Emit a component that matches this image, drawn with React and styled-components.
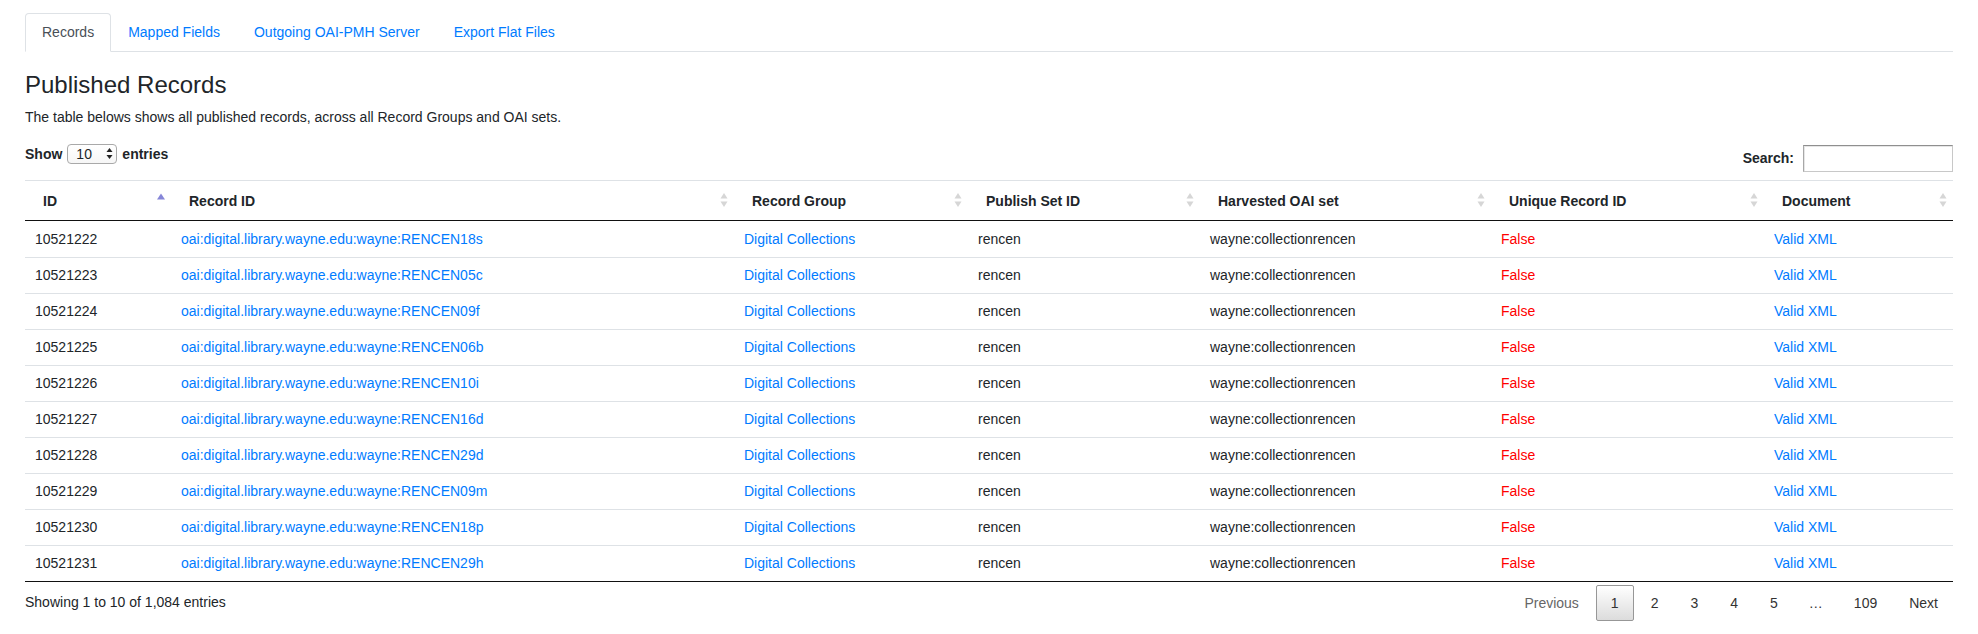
import styled, { createGlobalStyle } from "styled-components";

const GlobalStyle = createGlobalStyle`
  * { box-sizing: border-box; }
  html, body { margin: 0; padding: 0; background: #fff; }
  body {
    font-family: "Liberation Sans", Arial, Helvetica, sans-serif;
    font-size: 14px;
    line-height: 1.5;
    color: #212529;
  }
`;

const Page = styled.div`
  padding: 13px 25px 0;
`;

const Tabs = styled.ul`
  display: flex;
  list-style: none;
  margin: 0;
  padding: 0;
  border-bottom: 1px solid #dee2e6;
`;

const Tab = styled.li`
  margin-bottom: -1px;
`;

const TabLink = styled.a`
  display: block;
  padding: 8px 16px;
  line-height: 21px;
  border: 1px solid transparent;
  border-color: ${(p) => (p.$active ? "#dee2e6 #dee2e6 #fff" : "transparent")};
  border-top-left-radius: 4px;
  border-top-right-radius: 4px;
  background: ${(p) => (p.$active ? "#fff" : "transparent")};
  color: ${(p) => (p.$active ? "#495057" : "#007bff")};
  text-decoration: none;
  cursor: pointer;
`;

const Title = styled.h3`
  margin: 19px 0 7px;
  font-size: 24px;
  font-weight: 400;
  line-height: 1.2;
`;

const Lead = styled.p`
  margin: 0 0 16px;
`;

const Controls = styled.div`
  display: flex;
  justify-content: space-between;
  align-items: flex-start;
  height: 36px;
`;

const LengthLabel = styled.label`
  display: flex;
  align-items: center;
  gap: 5px;
  font-weight: 700;
  line-height: 21px;
`;

const SelectWrap = styled.span`
  position: relative;
  display: inline-block;
  height: 20px;
`;

const Select = styled.select`
  appearance: none;
  -webkit-appearance: none;
  width: 50px;
  height: 20px;
  padding: 0 0 0 8px;
  border: 1px solid #a9a9a9;
  border-radius: 4px;
  background: linear-gradient(to bottom, #fff 0%, #f6f6f6 100%);
  font-family: inherit;
  font-size: 14px;
  font-weight: 400;
  line-height: 18px;
  color: #212529;
`;

const SelectArrows = styled.svg`
  position: absolute;
  right: 4px;
  top: 3px;
  pointer-events: none;
`;

const SearchLabel = styled.label`
  display: flex;
  align-items: center;
  gap: 9px;
  margin-top: 1px;
  font-weight: 700;
`;

const SearchInput = styled.input`
  width: 150px;
  height: 27px;
  padding: 2px 4px;
  border: 1px solid #c8c8c8;
  border-top-color: #8f8f8f;
  border-left-color: #a8a8a8;
  box-shadow: inset 1px 1px 0 #e6e6e6;
  font-family: inherit;
  font-size: 14px;
`;

const Table = styled.table`
  width: 100%;
  table-layout: fixed;
  border-collapse: separate;
  border-spacing: 0;
`;

const Th = styled.th`
  position: relative;
  padding: 10px 18px 9px;
  line-height: 20px;
  text-align: left;
  font-weight: 700;
  border-top: 1px solid #dee2e6;
  border-bottom: 1px solid #111;
  white-space: nowrap;
`;

const SortIcon = styled.svg`
  position: absolute;
  right: 6px;
  top: 50%;
  transform: translateY(-50%);
`;

const Row = styled.tr`
  &:first-child td { padding-top: 9px; }
  &:last-child td { border-bottom-color: #111; }
`;

const Td = styled.td`
  padding: 8px 10px;
  line-height: 19px;
  border-bottom: 1px solid #dee2e6;
  white-space: nowrap;
  overflow: hidden;
  color: ${(p) => (p.$tone === "link" ? "#007bff" : p.$tone === "bad" ? "#f00" : "#212529")};
`;

const Footer = styled.div`
  display: flex;
  justify-content: space-between;
  align-items: flex-start;
`;

const Info = styled.div`
  padding-top: 10.5px;
  line-height: 21px;
`;

const Pager = styled.div`
  display: flex;
  align-items: center;
  padding-top: 3px;
`;

const PageButton = styled.a`
  display: inline-block;
  padding: 7px 14px;
  margin-left: 2px;
  line-height: 20px;
  text-align: center;
  border: 1px solid ${(p) => (p.$current ? "#979797" : "transparent")};
  border-radius: 2px;
  background: ${(p) => (p.$current ? "linear-gradient(to bottom, #fff 0%, #dcdcdc 100%)" : "transparent")};
  color: ${(p) => (p.$disabled ? "#666" : "#333")};
  cursor: ${(p) => (p.$disabled ? "default" : "pointer")};
`;

const Ellipsis = styled.span`
  padding: 0 14px;
  margin-left: 2px;
  line-height: 20px;
  color: #333;
`;

const columns = [
  { label: "ID", width: 146, sort: "asc" },
  { label: "Record ID", width: 563 },
  { label: "Record Group", width: 234 },
  { label: "Publish Set ID", width: 232 },
  { label: "Harvested OAI set", width: 291 },
  { label: "Unique Record ID", width: 273 },
  { label: "Document", width: 189 },
];

const suffixes = ["18s", "05c", "09f", "06b", "10i", "16d", "29d", "09m", "18p", "29h"];

const rows = suffixes.map((s, i) => ({
  id: 10521222 + i,
  recordId: `oai:digital.library.wayne.edu:wayne:RENCEN${s}`,
}));

function Sort({ dir }) {
  return (
    <SortIcon width="8" height="14" viewBox="0 0 8 14">
      {dir === "asc" ? (
        <polygon points="4,0.5 8,6.5 0,6.5" fill="#8686d8" />
      ) : (
        <>
          <polygon points="4,0 7.5,5.5 0.5,5.5" fill="#d6d6d6" />
          <polygon points="0.5,8.5 7.5,8.5 4,14" fill="#d6d6d6" />
        </>
      )}
    </SortIcon>
  );
}

function App() {
  return (
    <Page>
      <GlobalStyle />
      <Tabs>
        <Tab><TabLink $active>Records</TabLink></Tab>
        <Tab><TabLink>Mapped Fields</TabLink></Tab>
        <Tab><TabLink>Outgoing OAI-PMH Server</TabLink></Tab>
        <Tab><TabLink>Export Flat Files</TabLink></Tab>
      </Tabs>

      <Title>Published Records</Title>
      <Lead>The table belows shows all published records, across all Record Groups and OAI sets.</Lead>

      <Controls>
        <LengthLabel>
          Show
          <SelectWrap>
            <Select defaultValue="10">
              <option value="10">10</option>
              <option value="25">25</option>
              <option value="50">50</option>
              <option value="100">100</option>
            </Select>
            <SelectArrows width="7" height="13" viewBox="0 0 7 13">
              <polygon points="3.5,1 6.5,5 0.5,5" fill="#222" />
              <polygon points="0.5,8 6.5,8 3.5,12" fill="#222" />
            </SelectArrows>
          </SelectWrap>
          entries
        </LengthLabel>
        <SearchLabel>
          Search:
          <SearchInput type="search" />
        </SearchLabel>
      </Controls>

      <Table>
        <colgroup>
          {columns.map((c) => (
            <col key={c.label} style={{ width: c.width }} />
          ))}
        </colgroup>
        <thead>
          <tr>
            {columns.map((c) => (
              <Th key={c.label}>
                {c.label}
                <Sort dir={c.sort || "both"} />
              </Th>
            ))}
          </tr>
        </thead>
        <tbody>
          {rows.map((r) => (
            <Row key={r.id}>
              <Td>{r.id}</Td>
              <Td $tone="link">{r.recordId}</Td>
              <Td $tone="link">Digital Collections</Td>
              <Td>rencen</Td>
              <Td>wayne:collectionrencen</Td>
              <Td $tone="bad">False</Td>
              <Td $tone="link">Valid XML</Td>
            </Row>
          ))}
        </tbody>
      </Table>

      <Footer>
        <Info>Showing 1 to 10 of 1,084 entries</Info>
        <Pager>
          <PageButton $disabled>Previous</PageButton>
          <PageButton $current>1</PageButton>
          <PageButton>2</PageButton>
          <PageButton>3</PageButton>
          <PageButton>4</PageButton>
          <PageButton>5</PageButton>
          <Ellipsis>…</Ellipsis>
          <PageButton>109</PageButton>
          <PageButton>Next</PageButton>
        </Pager>
      </Footer>
    </Page>
  );
}

export default App;
